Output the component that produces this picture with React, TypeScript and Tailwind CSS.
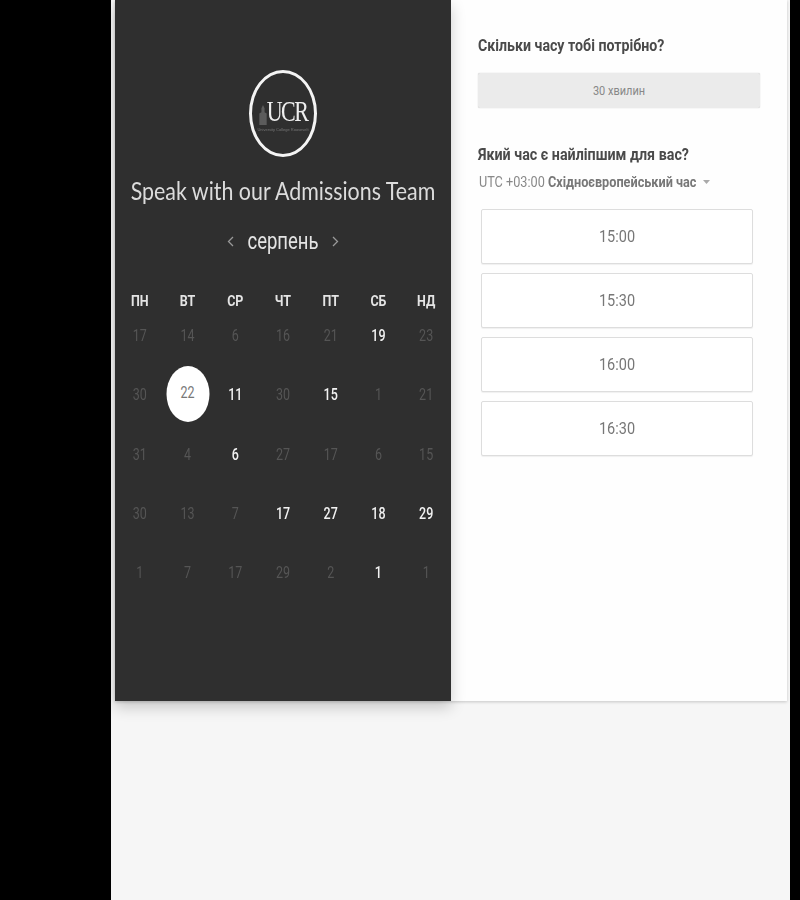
const weekDays = ['ПН', 'ВТ', 'СР', 'ЧТ', 'ПТ', 'СБ', 'НД'];

const rows = [
  [['17', 0], ['14', 0], ['6', 0], ['16', 0], ['21', 0], ['19', 1], ['23', 0]],
  [['30', 0], ['22', 2], ['11', 1], ['30', 0], ['15', 1], ['1', 0], ['21', 0]],
  [['31', 0], ['4', 0], ['6', 1], ['27', 0], ['17', 0], ['6', 0], ['15', 0]],
  [['30', 0], ['13', 0], ['7', 0], ['17', 1], ['27', 1], ['18', 1], ['29', 1]],
  [['1', 0], ['7', 0], ['17', 0], ['29', 0], ['2', 0], ['1', 1], ['1', 0]],
] as [string, number][][];

const slots = ['15:00', '15:30', '16:00', '16:30'];

function Logo() {
  return (
    <div className="flex h-[87px] w-[68px] flex-col items-center justify-center rounded-[50%] border-[3px] border-[#f4f4f4] pt-[8px] blur-[0.3px]">
      <div className="flex items-end">
        <svg width="8" height="20" viewBox="0 0 7 19" className="mb-[1px]">
          <path d="M0 19V8l2-1V3l1.500-3L5 3v4l2 1v11z" fill="#5c5c5c" />
        </svg>
        <span className="origin-bottom scale-y-[1.3] font-['Liberation_Serif',serif] text-[22px] leading-[22px] tracking-[-1.500px] text-[#eee]">
          UCR
        </span>
      </div>
      <span className="mt-[1px] whitespace-nowrap font-['Liberation_Sans',sans-serif] text-[4px] leading-[5px] text-[#777]">
        University College Roosevelt
      </span>
    </div>
  );
}

function Calendar() {
  return (
    <div className="w-[334px] self-center">
      <div className="grid h-[20px] grid-cols-7 items-center">
        {weekDays.map((day) => (
          <span
            key={day}
            className="scale-y-[1.2] text-center font-['Roboto',sans-serif] text-[12.500px] font-bold leading-[20px] text-[#e4e4e4]"
          >
            {day}
          </span>
        ))}
      </div>
      <div className="mt-[15px] grid grid-cols-7 auto-rows-[59.3px]">
        {rows.flat().map(([value, state], i) => (
          <div key={i} className="relative flex h-[20px] items-center justify-center">
            {state === 2 && (
              <span className="absolute left-1/2 top-[-19px] h-[56px] w-[43px] -translate-x-1/2 rounded-[50%] bg-white" />
            )}
            <span
              className={`relative scale-y-[1.25] font-['Roboto',sans-serif] text-[12.500px] leading-[20px] ${
                state === 1 ? 'font-medium text-[#f2f2f2]' : state === 2 ? '-translate-y-[2px] text-[#777]' : 'text-[#555]'
              }`}
            >
              {value}
            </span>
          </div>
        ))}
      </div>
    </div>
  );
}

export default function App() {
  return (
    <div className="h-[900px] w-[800px] overflow-hidden bg-black">
      <div className="ml-[111px] h-full w-[679px] bg-[#f6f6f6] pl-[4px]">
        <div className="flex h-[701px] w-[672px] bg-[#fefefe] shadow-[0_1px_3px_rgba(0,0,0,0.2)]">
          <div className="flex w-[336px] flex-col items-center bg-[#2f2f2f] pt-[70px] shadow-[0_6px_14px_rgba(0,0,0,0.2)]">
            <Logo />
            <h1 className="mt-[18px] scale-y-[1.15] whitespace-nowrap font-['Lato',sans-serif] text-[21.400px] leading-[32px] text-[#dcdcdc]">
              Speak with our Admissions Team
            </h1>
            <div className="mt-[21px] flex h-[26px] items-center gap-[13px] font-['Roboto',sans-serif] text-[#e4e4e4]">
              <svg width="7" height="11" viewBox="0 0 7 11" fill="none" stroke="#999" strokeWidth="1.300">
                <path d="M6 1 1.500 5.500 6 10" />
              </svg>
              <span className="scale-y-[1.25] text-[18.500px] leading-[26px]">серпень</span>
              <svg width="7" height="11" viewBox="0 0 7 11" fill="none" stroke="#999" strokeWidth="1.300">
                <path d="M1 1l4.500 4.500L1 10" />
              </svg>
            </div>
            <div className="mt-[37px] flex w-full flex-col">
              <Calendar />
            </div>
          </div>
          <div className="flex flex-1 flex-col pl-[27px] pr-[27px] font-['Roboto',sans-serif]">
            <h2 className="mt-[35px] origin-left scale-y-[1.15] text-[14.200px] font-bold leading-[20px] text-[#4a4a4a]">
              Скільки часу тобі потрібно?
            </h2>
            <div className="mt-[18px] flex h-[35px] w-[282px] items-center justify-center rounded-[2px] bg-[#ebebeb] shadow-[0_0_1px_rgba(0,0,0,0.3)]">
              <span className="translate-y-[1px] scale-y-[1.15] text-[11px] leading-[20px] text-[#888]">30 хвилин</span>
            </div>
            <h2 className="mt-[36px] origin-left scale-y-[1.15] text-[14.300px] font-bold leading-[20px] text-[#4a4a4a]">
              Який час є найліпшим для вас?
            </h2>
            <div className="mt-[8px] flex h-[20px] items-center gap-[5px] whitespace-nowrap pl-[1px]">
              <span className="scale-y-[1.15] text-[12.700px] text-[#888]">
                UTC +03:00 <span className="font-bold text-[#777]">Східноєвропейський час</span>
              </span>
              <svg width="7" height="4" viewBox="0 0 7 4" className="ml-[2px]">
                <path d="M0 0h7L3.500 4z" fill="#aaa" />
              </svg>
            </div>
            <div className="mt-[17px] ml-[3px] flex w-[272px] flex-col gap-[9px]">
              {slots.map((slot) => (
                <div
                  key={slot}
                  className="flex h-[55px] items-center justify-center rounded-[2px] border border-[#ddd] bg-white shadow-[0_1px_1px_rgba(0,0,0,0.06)]"
                >
                  <span className="scale-y-[1.15] text-[14.500px] text-[#777]">{slot}</span>
                </div>
              ))}
            </div>
          </div>
        </div>
      </div>
    </div>
  );
}
